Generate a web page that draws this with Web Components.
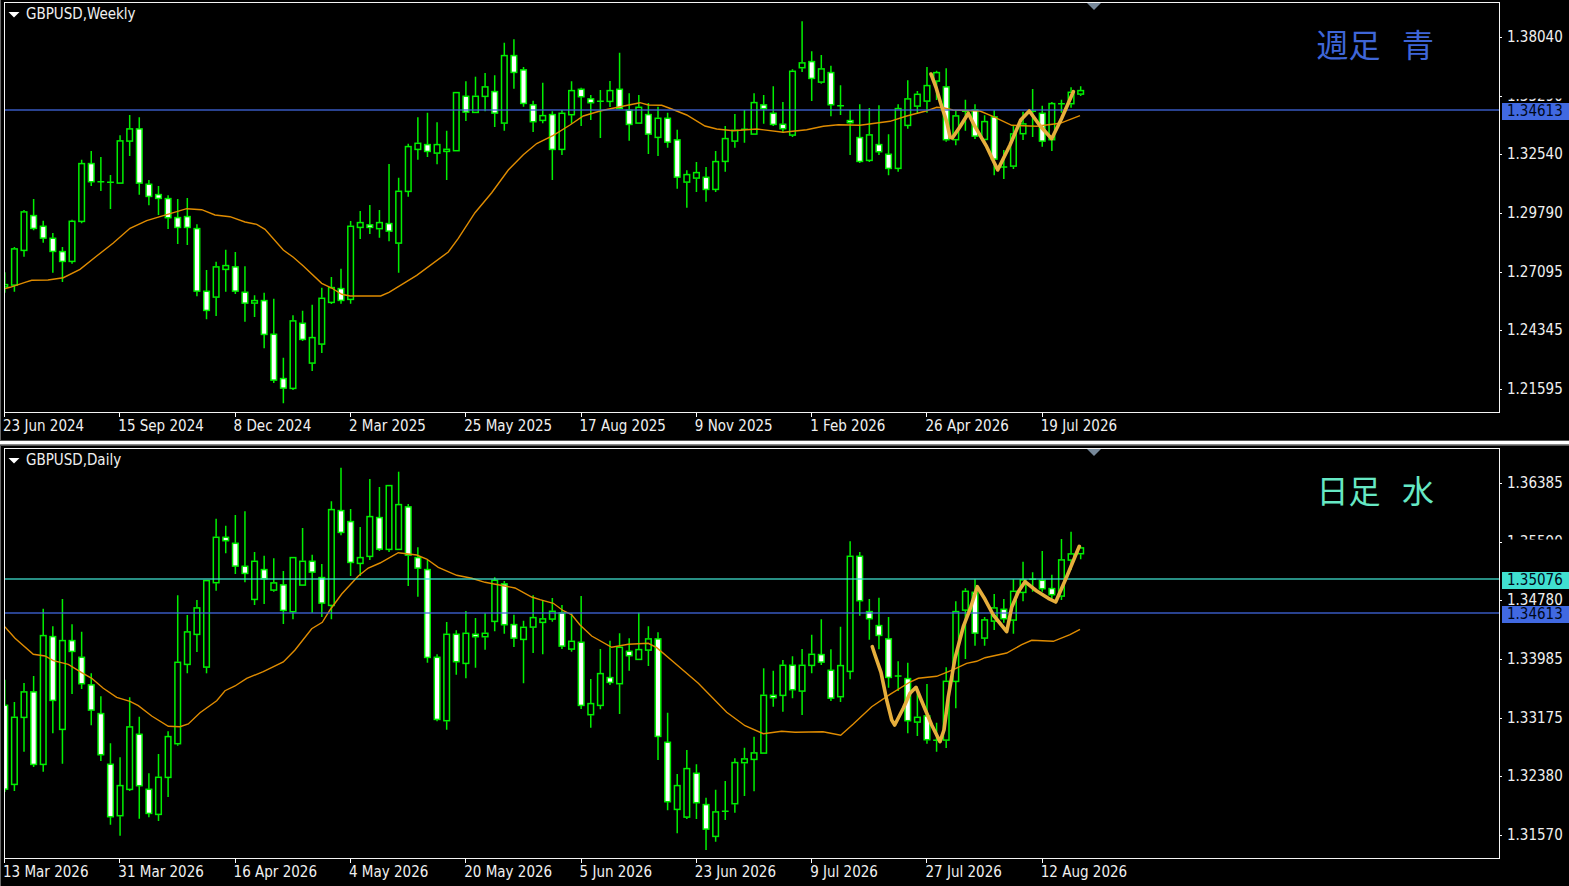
<!DOCTYPE html>
<html lang="en">
<head>
<meta charset="utf-8">
<meta name="viewport" content="width=device-width, initial-scale=1">
<title>GBPUSD</title>
<style>
  html, body {
    height: 100%;
    margin: 0;
    background: #000;
  }

  body {
    color: #f0f0f0;
    font: 15px/17px "DejaVu Sans Condensed", "DejaVu Sans", sans-serif;
  }
</style>
</head>
<body>
<chart-workspace>
  <chart-window name="weekly"></chart-window>
  <chart-window name="daily"></chart-window>
</chart-workspace>

<script>
// candle rows: high, body top, body bottom, low, kind (u = up, d = down, x = doji)
const CHARTS = {
  weekly: {
    title: 'GBPUSD,Weekly',
    memo: '週足   青',
    memoColor: '#3f66d8',
    prices: ['1.38040', '1.35290', '1.32540', '1.29790', '1.27095', '1.24345', '1.21595'],
    cut: 'inset(11px 0 0 0)',
    dates: ['23 Jun 2024', '15 Sep 2024', '8 Dec 2024', '2 Mar 2025', '25 May 2025', '17 Aug 2025', '9 Nov 2025', '1 Feb 2026', '26 Apr 2026', '19 Jul 2026'],
    levels: [{ y: 110, price: '1.34613', color: '#4169e1' }],
    candles: `
      272.3 284 287.5 292.7 u|247 248.3 285.7 291.7 u|210 211.3 251 256.7 u|199 215 229 230.3 d
      220.7 225.7 238.7 242.7 d|233 237.7 252 272.7 d|247 251 262 282 d|219.7 220.7 262 263.7 u
      159.7 163 222 223.3 u|151 163 182.3 186 d|157 181.7 181.7 191 x|175 182.3 182.3 209 x
      135.3 140.3 183.7 183.7 u|115 128.3 141.7 156 u|117.3 128.3 183.7 194.7 d|180 183.7 197 205.3 d
      186 194 199 215 d|195.3 198 218.3 229 d|199 217 228 244 d|198 216 228 245 d
      224.3 228 291.7 296.3 d|270 290.7 311 319.3 d|261.7 266.3 297.7 316 u|249.7 265 270 291.7 u
      252 266.3 291.7 294 d|266.3 291.7 303.7 321.7 d|295.3 300 303.7 317 u|292.7 300 335 348.3 d
      298.7 333.7 380.7 383 d|357.7 378 388.7 403.3 d|315.3 320.3 389 390 u|310.7 322.7 340 341 d
      304.7 337 363.7 371 u|287.7 297.7 344.7 353 u|277 287 303 304 u|268.7 288 301 303.7 d
      221 225.7 300 303.7 u|211 222 228 239 u|205 224.3 228 234 d|210 222 229.3 237.7 u
      164 223 231.7 241.3 d|177.7 190.7 243.7 272.7 u|143.7 146 192 196.7 u|117.3 142.7 150 159.7 u
      112.7 144 152 157 d|122.3 144 153.7 164.3 u|130.7 148.7 152 180 u|92 92 151.3 151.3 u
      81.3 95.7 112.7 121 d|76.7 95.7 113 113 u|73 86.3 97 111.3 u|75.3 91 113.7 127 d
      42.7 55 123.7 130.7 u|39.3 55 73 88.7 d|67 69.3 104 106.7 d|100.7 104.3 122.3 132 d
      82.7 115 121 123.3 u|111.3 114 150 180 d|110 112.7 150 155 u|81.3 90 115.3 123.7 u
      87.7 88.7 97.3 126 d|95 98.3 103.3 120 d|90 101.3 101.3 138 x|81 90 102 107 u
      52.7 88.7 109 109.3 d|93.3 109.7 125 140.7 d|95 106.7 123.7 123.7 u|103 114 134.7 154 d
      106.7 117.7 138 156 u|112.7 117.7 142.7 147.7 d|129.7 139.3 177.7 188.7 d|170.3 174 182.7 207.7 u
      162 172 178.7 192 u|167 176.7 190 201.7 d|151 161 190 192 u|126 138 162 171.7 u
      114 129.7 141.7 147.7 u|110 129.3 129.3 142.7 x|93.3 102 134.7 134.7 u|95 104.3 109.3 123.7 d
      86.3 112.7 125 126 d|102 123.7 129.3 133 d|69.3 70.7 135.7 137 u|21.3 62.3 68.3 72 u
      51.3 61 79 101 d|55 68.3 82.7 83.7 u|65.7 72 105.3 116.3 d|85.3 105.7 105.7 115 x
      110 120 123.3 155 d|104.3 137 162 163 d|108 134.3 161 162 u|105.3 144 152.3 155 d
      134.3 153.7 169 175.3 d|104.3 108 169 171.7 u|80.3 98.3 126 128.7 u|91 93.7 106.7 113.3 u
      67 85 101.7 112.7 u|70.7 72 81.7 100 u|68.3 86.3 140.3 141.7 d|110.3 115.3 140.3 145.3 u
      99.7 111.3 111.3 130.7 x|104.3 109.3 136.7 139 d|115.3 121 140 141.7 u|110.3 116.3 159.7 175.3 d
      150 167 167 179 x|126 133.3 166.7 169 u|111.7 123.3 134.3 140 u|89 111.3 111.3 137 x
      105.7 112.7 141.7 146.7 d|102 103 140.3 151 u|99.7 103.7 103.7 112.7 x|87.3 91.7 104.3 107.7 u
      86.3 90 94.7 96 u`,
    average: '4.7,288.7 10,287.3 25,282.3 31.7,280.3 48,280 63.3,277.7 80,269.3 96.7,256 113,243.3 130,228.3 146.7,220.7 166.7,214.7 186.7,208.7 201.7,209.7 215,215 230,216.7 245,222 256.7,224.3 265,229.3 283.3,250 293.3,257.3 303.3,266 321.7,283.3 331.7,288 341.7,294.3 350,296 380.7,296 389,292.3 416.7,275.3 448.3,252 458.3,238.3 475,212.7 491.7,192.7 508.3,170 523.3,154.7 536.7,143.5 553.3,135.3 570,125 583.3,116 600,111 620,106.7 640,102.7 648.3,105 661.7,105.3 671.7,109 686.7,115 705,126 716.7,129 733.3,130.7 756.7,129 783.3,132.3 806.7,129.7 823.3,126.3 838.3,124.7 860,125.3 890,121.3 906.7,116 925,111.3 936.7,107.3 943,107.7 953,110 980,111 993.3,116.7 1011.7,125.3 1036.7,126.3 1060,123.3 1080,115.7',
    wave: '931,74 936,87.3 940.7,103.3 946.7,121.7 950,137 952.3,138 960,126.7 968.3,113.3 975,126.7 986.7,146.7 997.7,170 1010,145 1020.7,120 1029.3,111 1040,125.7 1051.7,138.7 1061.7,118.3 1073.3,91.7'
  },
  daily: {
    title: 'GBPUSD,Daily',
    memo: '日足   水',
    memoColor: '#66e8c4',
    prices: ['1.36385', '1.35590', '1.34780', '1.33985', '1.33175', '1.32380', '1.31570'],
    cut: 'inset(0 0 11px 0)',
    dates: ['13 Mar 2026', '31 Mar 2026', '16 Apr 2026', '4 May 2026', '20 May 2026', '5 Jun 2026', '23 Jun 2026', '9 Jul 2026', '27 Jul 2026', '12 Aug 2026'],
    levels: [
      { y: 133, price: '1.35076', color: '#40e0d0' },
      { y: 167, price: '1.34613', color: '#4169e1' }
    ],
    candles: `
      233.7 258.7 343.7 346 d|256 270.7 339 345 u|237 245.3 272 305.7 u|230 245.3 319 321 d
      162.7 189 319 325.7 u|180.3 190 255 287.3 d|153 194 284 317.7 u|178.3 194 206 248 d
      185.7 210.7 238.3 243 d|227.3 238.3 264.7 279.3 d|250.3 267 309.3 315 d|297.3 317.7 371.3 378.7 d
      311.3 339 370.3 389.7 u|251.3 280.3 344 345 u|270.7 287.7 340.3 372.7 d|327.3 342.7 368 371.3 d
      308 330.7 369 375 u|285.3 290 332 351 u|149.3 215.7 298.3 299.7 u|169 185.3 219 227.3 u
      154 161.3 189 206 u|134 134 221.7 227.3 u|72.7 90.7 137.3 144.7 u|79.7 90.7 95.3 107.3 d
      69 96.7 120.7 128 d|65.3 119.7 128 136.3 d|106 114.7 154 159 u|109.7 123 133.3 158 d
      112.3 136.3 144.7 145.7 u|125 138.3 165 178 d|111 111 166.3 173.3 u|82 114.7 139.7 139.7 u
      108.7 114.7 126.7 166.7 d|118 131 157.7 171 d|55.3 63 160 173.3 u|21.7 64 87 89.3 d
      63 75 117 130 d|81 111 118 130 u|33 70 111 114 u|41 71 103.7 105 d
      39 39 104 106 u|25.7 58 104 104 u|58 60.3 109.7 140 d|101.3 111 122.7 150.7 d
      114 123 212 216.7 d|208.3 210.7 274 275.3 d|176 187.7 275.3 283.7 u|184.3 187.7 216.3 228.7 d
      165 186.7 218 232.3 u|172 187.7 191.3 221.7 d|167.3 186.7 191.3 203.7 u|131.3 133.7 176 185.3 u
      135 137.3 179.3 187.7 d|168.7 178 192.7 201 d|174.7 180.7 194 237.3 u|149.3 171 181.7 207 u
      154.3 172.3 177 208.3 u|152 164.7 173.7 175.7 u|159 166.3 200.7 203 d|167.3 194.7 203.7 205.7 u
      150 195.7 260 263 d|233 257 269.3 281.7 u|203 227 260 263.3 u|194.7 231 237 239 d
      187.3 200.7 238.3 268 u|192.3 204.7 210.3 224.7 d|166.7 203 214 214 u|180.3 192.3 204.7 220 u
      186.3 192.3 291 314 d|266.7 295.7 356.3 364.3 d|328 339 364 387.3 u|304 322 371.7 373 u
      318.3 326.7 357.3 373 d|351.7 358 383.7 404 d|343.7 365.3 391 395.7 u|335 365.3 365.3 374 x
      312.3 316 358.3 366.7 u|301.7 312.3 317.3 350 u|290.7 306.3 314 345.3 u|222.3 248.7 307.7 307.7 u
      224.7 248.7 252.3 260.7 d|214 218.7 250 265.7 u|210.3 218.7 244.3 252.3 d|203 218.7 245.7 269 u
      188.7 207.7 220 227.3 u|173.3 208 216.7 219 d|203.3 223.7 252.7 255 d|180.7 219 251.3 256 u
      95.3 109.7 226 233.3 u|106 109.7 155.3 169.7 d|153 165 173.3 193.7 d|151.7 179 190 203.3 d
      171 192.3 232 241.7 d|215.3 230 230 245 x|216.7 232 275.3 287.3 d|247.3 270.7 276.7 290 u
      238 269.3 294.3 297.7 d|276.7 294.3 294.3 305.7 x|221.3 234.7 294.7 302 u|155.3 165 236 262.3 u
      142.3 144.7 164.7 213 u|133.3 145.7 187.7 199.7 d|171 173.3 192.7 199.7 u|148 161.3 175.7 184 u
      153 162.7 173.3 176.7 d|133.3 144.7 174.7 187.7 u|115.7 133.3 147 155.3 u|126.3 133.3 133.3 145.7 x
      105 133.7 143.3 145.7 d|128.7 142 149.3 152.7 d|93 113.3 150.7 154 u|85.7 107.3 114.7 124 u
      100.7 101.3 108.3 113.3 u`,
    average: '4.7,180.7 15,192.3 33.3,208.3 45,210 53.3,214.7 68.3,218.3 81.7,226.7 91.7,232.3 103.3,242.3 116.7,251.3 130,255.3 138.3,259.7 151.7,270 168.3,280.3 180,280.7 188.3,278 200,266.7 216.7,254.7 225,244.7 235,240 246.7,232.3 263.3,225.7 283.3,216 295,204 311.7,182.7 322.3,176.3 330,164 341.7,148 358.3,130 368.3,122 380,117 398.3,106.7 416.7,109 426.7,113 438.3,121.3 456.7,129.3 471.7,132.3 485,136.3 503.3,139.7 515,142 531.7,151 540,153.7 553.3,157.3 563.3,164.7 571.7,168.7 580,179 591.7,190 611.7,201.3 628.3,198.3 648.3,197.3 656.7,201.7 675,217.3 698.3,237.3 726.7,266.3 745,279.7 763.3,287.7 781.7,285.3 795,286.3 823,285.7 840.7,289.3 853.3,278 871.7,260.7 890,248.3 910,236 918.3,232.3 936.7,230.3 953.3,223.7 966.7,217.3 976.7,215.3 985,211.7 1006.7,207 1021.7,198.7 1031.7,194.3 1053.3,195.3 1070,188.7 1080,183.3',
    wave: '872.3,200.7 875,209 881,226.3 886.7,254 891.7,274 894.7,279 903.3,262.3 910,247.3 916,241.3 923.3,259 931.7,279 940,295.7 944,284 948.3,250.7 955,212.3 963.3,180.7 970.7,161.3 977.3,140.7 985,153.3 993.3,169 1006.7,185.7 1011.7,161.3 1018.3,145.7 1025,135.7 1036.7,145 1048.3,152.3 1055.7,156 1066.7,130.7 1079.3,100.3'
  }
};

class ChartWorkspace extends HTMLElement {
  constructor() {
    super();
    this.attachShadow({ mode: 'open' });

    this.shadowRoot.innerHTML = `
      <style>
        :host {
          display: flex;
          flex-direction: column;
          gap: 6px;
          min-height: 100vh;
          background: linear-gradient(#555 0 1px, #fff 1px 4px, #8a8a8a 4px 5px, #555 5px 6px) center / 100% 6px no-repeat #000;
        }
      </style>
      <slot></slot>
    `;
  }
}

class PriceAxis extends HTMLElement {
  constructor() {
    super();
    this.attachShadow({ mode: 'open' });
  }

  set chart(chart) {
    const rows = chart.prices.map((price, i) => `
      <div class="row"><i></i><span${i === 1 ? ' class="cut"' : ''}>${price}</span></div>`).join('');
    const tags = chart.levels.map((level) => `
      <div class="tag" style="top: calc(100% * ${level.y} / 412 - 9px); background: ${level.color}">${level.price}</div>`).join('');

    this.shadowRoot.innerHTML = `
      <style>
        :host {
          display: block;
          position: relative;
        }

        .rows {
          box-sizing: border-box;
          display: grid;
          grid-auto-rows: 1fr;
          height: calc(100% + 6px);
          padding-top: 6px;
          margin-bottom: -6px;
        }

        .row {
          display: flex;
          align-items: center;
          gap: 5px;
        }

        .row i {
          width: 2px;
          height: 1px;
          background: #fff;
        }

        .cut {
          clip-path: ${chart.cut};
        }

        .tag {
          position: absolute;
          left: 2px;
          right: 0;
          padding-left: 5px;
          color: #000818;
        }
      </style>
      <div class="rows">${rows}</div>
      ${tags}
    `;
  }
}

class DateAxis extends HTMLElement {
  constructor() {
    super();
    this.attachShadow({ mode: 'open' });
  }

  set dates(dates) {
    this.shadowRoot.innerHTML = `
      <style>
        :host {
          display: grid;
          grid-template-columns: repeat(13, 1fr);
        }

        span {
          white-space: nowrap;
        }

        span::before {
          content: "";
          display: block;
          width: 1px;
          height: 4px;
          margin: 0 0 1px 1px;
          background: #fff;
        }
      </style>
      ${dates.map((date) => `<span>${date}</span>`).join('')}
    `;
  }
}

class CandlePlot extends HTMLElement {
  constructor() {
    super();
    this.attachShadow({ mode: 'open' });
  }

  _candle(row, i) {
    const [high, top, bottom, low, kind] = row.trim().split(' ');
    const x = 4.8 + 9.606 * i;
    if (kind === 'x') {
      return `<path d="M${x} ${high}V${low}M${x - 3.4} ${top}h6.8"/>`;
    }
    const height = Math.max(bottom - top - 1.2, 1);
    return `<path d="M${x} ${high}V${top}M${x} ${bottom}V${low}"/>
      <rect x="${x - 2.8}" y="${+top + 0.6}" width="5.6" height="${height}" fill="${kind === 'd' ? '#fff' : '#000'}"/>`;
  }

  set chart(chart) {
    const candles = chart.candles.trim().split(/[|\n]/).map(this._candle).join('');
    const levels = chart.levels.map((level) => `
      <path d="M5 ${level.y}H1499" stroke="${level.color}" stroke-opacity=".85"/>`).join('');

    this.shadowRoot.innerHTML = `
      <style>
        :host {
          display: block;
          position: relative;
          overflow: hidden;
          border: 1px solid #f4f4f4;
        }

        svg {
          display: block;
          position: absolute;
          width: 100%;
          height: 100%;
        }
      </style>
      <svg viewBox="5 3 1494 409" preserveAspectRatio="none" fill="none" stroke-width="1.4" aria-hidden="true">
        <g stroke="#00f000" stroke-width="1.5">${candles}</g>
        <polyline points="${chart.average}" stroke="#e08c00"/>
        ${levels}
        <polyline points="${chart.wave}" stroke="#e6ae3c" stroke-width="3.6" stroke-linecap="round" stroke-linejoin="round"/>
        <path d="M1087 3h14l-7 7z" fill="#778899"/>
      </svg>
    `;
  }
}

class ChartWindow extends HTMLElement {
  constructor() {
    super();
    this.attachShadow({ mode: 'open' });
  }

  connectedCallback() {
    const chart = CHARTS[this.getAttribute('name')];

    this.shadowRoot.innerHTML = `
      <style>
        :host {
          flex: 1;
          box-sizing: border-box;
          display: grid;
          grid-template: 1fr 27px / 1fr 69px;
          position: relative;
          padding: 2px 0 0 3px;
          border-left: 1px solid #666;
          background: #000;
        }

        date-axis {
          margin: 0 -2px 0 -1px;
        }

        header {
          position: absolute;
          top: 6px;
          left: 7px;
          display: flex;
          align-items: center;
          gap: 6px;
        }

        button {
          width: 12px;
          height: 6px;
          padding: 0;
          border: 0;
          background: #fff;
          clip-path: polygon(0 0, 100% 0, 50% 100%);
        }

        h2 {
          margin: 0;
          font: inherit;
        }

        .memo {
          position: absolute;
          top: 20px;
          right: 135px;
          margin: 0;
          font: 400 32px/46px "Noto Sans CJK JP", sans-serif;
          white-space: pre;
          color: ${chart.memoColor};
        }
      </style>
      <candle-plot></candle-plot>
      <price-axis></price-axis>
      <date-axis></date-axis>
      <header>
        <button type="button" aria-label="One-click trading"></button>
        <h2>${chart.title}</h2>
      </header>
      <p class="memo" lang="ja">${chart.memo}</p>
    `;

    this.shadowRoot.querySelector('candle-plot').chart = chart;
    this.shadowRoot.querySelector('price-axis').chart = chart;
    this.shadowRoot.querySelector('date-axis').dates = chart.dates;
  }
}

customElements.define('price-axis', PriceAxis);
customElements.define('date-axis', DateAxis);
customElements.define('candle-plot', CandlePlot);
customElements.define('chart-window', ChartWindow);
customElements.define('chart-workspace', ChartWorkspace);
</script>
</body>
</html>
